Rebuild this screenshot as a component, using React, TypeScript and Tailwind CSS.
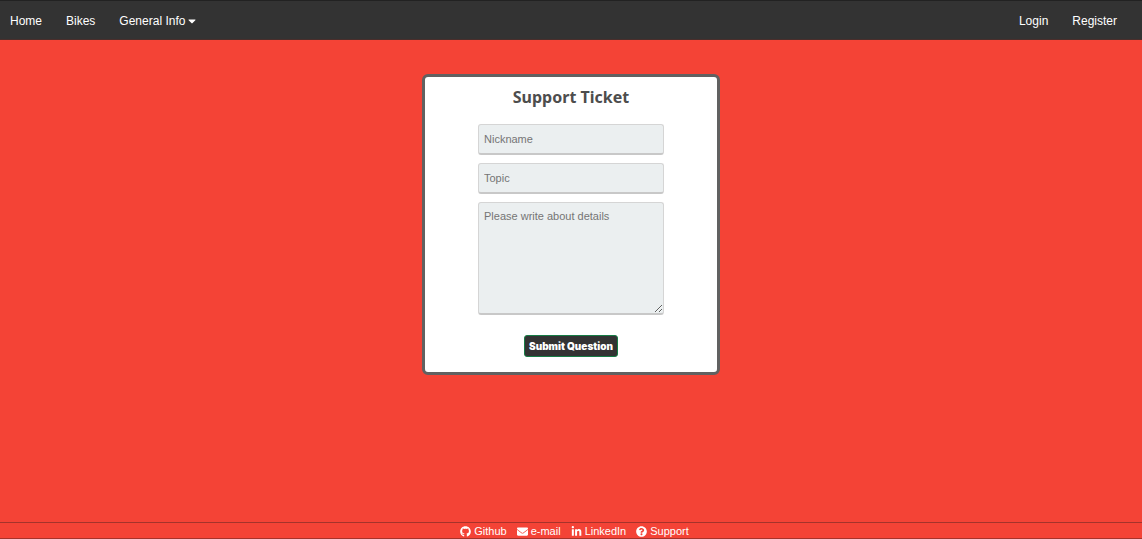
import { FaCaretDown, FaEnvelope, FaGithub, FaLinkedinIn, FaQuestionCircle } from "react-icons/fa";

const fieldStyle =
  "block w-full rounded-[3px] border border-b-2 border-[#d5d5d5] border-b-[#c8c8c8] bg-[#ebeff0] px-[5px] text-[11px] text-gray-700 placeholder:text-[#757575] outline-none";

const footerLinks = [
  { label: "Github", href: "#github", Icon: FaGithub },
  { label: "e-mail", href: "#email", Icon: FaEnvelope },
  { label: "LinkedIn", href: "#linkedin", Icon: FaLinkedinIn },
  { label: "Support", href: "#support", Icon: FaQuestionCircle },
];

function NavBar() {
  return (
    <nav className="flex h-10 items-center justify-between border-y border-t-[#222222] border-b-[#4a2e2b] bg-[#333333] pt-px pr-[25px] pl-2.5 text-[12px] text-white">
      <div className="flex items-center gap-6">
        <a href="#home">Home</a>
        <a href="#bikes">Bikes</a>
        <button type="button" className="flex items-center gap-px">
          General Info
          <FaCaretDown className="size-3" aria-hidden="true" />
        </button>
      </div>
      <div className="flex items-center gap-6">
        <a href="#login">Login</a>
        <a href="#register">Register</a>
      </div>
    </nav>
  );
}

function SupportForm() {
  return (
    <form
      className="flex w-full max-w-[298px] flex-col items-center rounded-md border-3 border-[#616161] bg-white px-[53px] pt-2 pb-[15px]"
      onSubmit={(event) => event.preventDefault()}
    >
      <h1 className="font-['Noto_Sans',sans-serif] text-[16px] leading-6 font-bold text-[#4d4d4d]">
        Support Ticket
      </h1>
      <div className="mt-[15px] flex w-full flex-col gap-2">
        <input className={`${fieldStyle} h-[31px]`} type="text" aria-label="Nickname" placeholder="Nickname" />
        <input className={`${fieldStyle} h-[31px]`} type="text" aria-label="Topic" placeholder="Topic" />
        <textarea
          className={`${fieldStyle} h-[113px] resize py-[7px] leading-[13px]`}
          aria-label="Details"
          placeholder="Please write about details"
        />
      </div>
      <button
        type="submit"
        className="mt-5 h-[22px] rounded-[3px] border border-[#167c45] bg-[#333333] px-1 font-['Inter',sans-serif] text-[10px] font-black whitespace-nowrap text-white"
      >
        Submit Question
      </button>
    </form>
  );
}

export default function App() {
  return (
    <div className="flex min-h-screen flex-col bg-[#f44336] font-['Liberation_Sans',Arial,sans-serif]">
      <NavBar />
      <main className="flex flex-1 items-start justify-center pt-[34px] pb-6">
        <SupportForm />
      </main>
      <footer className="flex items-center justify-center gap-2.5 border-y border-t-[#a5332b] border-b-[#a5332b] pt-px pl-[7px] text-[11px] leading-[14px] text-white">
        {footerLinks.map(({ label, href, Icon }) => (
          <a key={label} href={href} className="flex items-center gap-[3px]">
            <Icon className="h-[11px] w-auto" aria-hidden="true" />
            {label}
          </a>
        ))}
      </footer>
    </div>
  );
}
